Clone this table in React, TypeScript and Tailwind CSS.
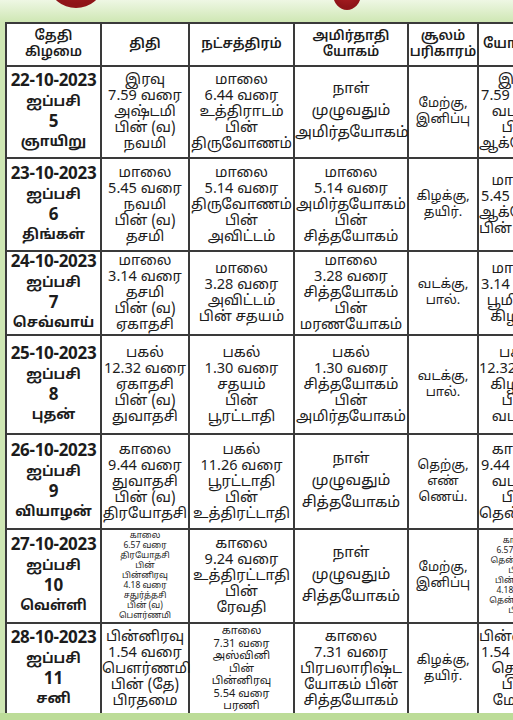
import React from "react";

type Cell = { lines: string[]; size?: "sm" | "xs" | "md" | "xsm" };
type Row = { date: string[]; h: string; cells: Cell[] };

const rows: Row[] = [
  {
    date: ["22-10-2023", "ஐப்பசி", "5", "ஞாயிறு"],
    h: "h-[92px]",
    cells: [
      { lines: ["இரவு", "7.59 வரை", "அஷ்டமி", "பின் (வ)", "நவமி"] },
      { lines: ["மாலை", "6.44 வரை", "உத்திராடம்", "பின்", "திருவோணம்"] },
      { lines: ["நாள்", "முழுவதும்", "அமிர்தயோகம்"], size: "md" },
      { lines: ["மேற்கு,", "இனிப்பு"], size: "sm" },
      { lines: ["இரவு", "7.59 வரை", "வடக்கு", "பின்", "ஆக்னேயம்"] },
    ],
  },
  {
    date: ["23-10-2023", "ஐப்பசி", "6", "திங்கள்"],
    h: "h-[93px]",
    cells: [
      { lines: ["மாலை", "5.45 வரை", "நவமி", "பின் (வ)", "தசமி"] },
      { lines: ["மாலை", "5.14 வரை", "திருவோணம்", "பின்", "அவிட்டம்"] },
      { lines: ["மாலை", "5.14 வரை", "அமிர்தயோகம்", "பின்", "சித்தயோகம்"] },
      { lines: ["கிழக்கு,", "தயிர்."], size: "sm" },
      { lines: ["மாலை", "5.45 வரை", "ஆக்னேயம்", "பின் தெற்கு"] },
    ],
  },
  {
    date: ["24-10-2023", "ஐப்பசி", "7", "செவ்வாய்"],
    h: "h-[83px]",
    cells: [
      { lines: ["மாலை", "3.14 வரை", "தசமி", "பின் (வ)", "ஏகாதசி"] },
      { lines: ["மாலை", "3.28 வரை", "அவிட்டம்", "பின் சதயம்"] },
      { lines: ["மாலை", "3.28 வரை", "சித்தயோகம்", "பின்", "மரணயோகம்"] },
      { lines: ["வடக்கு,", "பால்."], size: "sm" },
      { lines: ["மாலை", "3.14 வரை", "பூமியில்", "கிழக்கு"] },
    ],
  },
  {
    date: ["25-10-2023", "ஐப்பசி", "8", "புதன்"],
    h: "h-[99px]",
    cells: [
      { lines: ["பகல்", "12.32 வரை", "ஏகாதசி", "பின் (வ)", "துவாதசி"] },
      { lines: ["பகல்", "1.30 வரை", "சதயம்", "பின்", "பூரட்டாதி"] },
      { lines: ["பகல்", "1.30 வரை", "சித்தயோகம்", "பின்", "அமிர்தயோகம்"] },
      { lines: ["வடக்கு,", "பால்."], size: "sm" },
      { lines: ["பகல்", "12.32 வரை", "கிழக்கு", "பின்", "வடக்கு"] },
    ],
  },
  {
    date: ["26-10-2023", "ஐப்பசி", "9", "வியாழன்"],
    h: "h-[95px]",
    cells: [
      { lines: ["காலை", "9.44 வரை", "துவாதசி", "பின் (வ)", "திரயோதசி"] },
      { lines: ["பகல்", "11.26 வரை", "பூரட்டாதி", "பின்", "உத்திரட்டாதி"] },
      { lines: ["நாள்", "முழுவதும்", "சித்தயோகம்"], size: "md" },
      { lines: ["தெற்கு,", "எண்", "ணெய்."], size: "sm" },
      { lines: ["காலை", "9.44 வரை", "வடக்கு", "பின்", "தென்மேற்கு"] },
    ],
  },
  {
    date: ["27-10-2023", "ஐப்பசி", "10", "வெள்ளி"],
    h: "h-[94px]",
    cells: [
      {
        size: "xs",
        lines: ["காலை", "6.57 வரை", "திரயோதசி", "பின்", "பின்னிரவு", "4.18 வரை", "சதுர்த்தசி", "பின் (வ)", "பௌர்ணமி"],
      },
      { lines: ["காலை", "9.24 வரை", "உத்திரட்டாதி", "பின்", "ரேவதி"] },
      { lines: ["நாள்", "முழுவதும்", "சித்தயோகம்"], size: "md" },
      { lines: ["மேற்கு,", "இனிப்பு"], size: "sm" },
      {
        size: "xs",
        lines: ["காலை", "6.57 வரை", "தென்மேற்கு", "பின்", "பின்னிரவு", "4.18 வரை", "தென்கிழக்கு", "பின்"],
      },
    ],
  },
  {
    date: ["28-10-2023", "ஐப்பசி", "11", "சனி"],
    h: "h-[92px]",
    cells: [
      { lines: ["பின்னிரவு", "1.54 வரை", "பௌர்ணமி", "பின் (தே)", "பிரதமை"] },
      { lines: ["காலை", "7.31 வரை", "அஸ்வினி", "பின்", "பின்னிரவு", "5.54 வரை", "பரணி"], size: "xsm" },
      { lines: ["காலை", "7.31 வரை", "பிரபலாரிஷ்ட", "யோகம் பின்", "சித்தயோகம்"] },
      { lines: ["கிழக்கு,", "தயிர்."], size: "sm" },
      { lines: ["பின்னிரவு", "1.54 வரை", "தெற்கு", "பின்", "மேற்கு"] },
    ],
  },
];

const headers: string[][] = [
  ["தேதி", "கிழமை"],
  ["திதி"],
  ["நட்சத்திரம்"],
  ["அமிர்தாதி", "யோகம்"],
  ["சூலம்", "பரிகாரம்"],
  ["யோகினி"],
];

const widths = ["w-[95px]", "w-[88px]", "w-[105px]", "w-[114px]", "w-[70px]", "w-[80px]"];

function Banner() {
  return (
    <svg width="513" height="22" viewBox="0 0 513 22" className="block">
      <defs>
        <linearGradient id="top" x1="0" y1="0" x2="0" y2="1">
          <stop offset="0" stopColor="#eef7e4" />
          <stop offset="1" stopColor="#cfe7b4" />
        </linearGradient>
        <radialGradient id="red" cx="0.5" cy="0.3" r="0.6">
          <stop offset="0" stopColor="#c0262b" />
          <stop offset="1" stopColor="#8f1418" />
        </radialGradient>
      </defs>
      <rect width="513" height="22" fill="url(#top)" />
      <ellipse cx="76" cy="-14" rx="26" ry="22" fill="url(#red)" />
      <ellipse cx="347" cy="-6" rx="14" ry="16" fill="url(#red)" />
    </svg>
  );
}

function Lines({ lines, size }: { lines: string[]; size?: string }) {
  const cls =
    size === "xs"
      ? "text-[8.5px] leading-[10px]"
      : size === "xsm"
      ? "text-[11px] leading-[12.5px]"
      : size === "sm"
      ? "text-[13px] leading-[16px]"
      : size === "md"
      ? "text-[15px] leading-[22px]"
      : "text-[14.5px] leading-[16px]";
  return (
    <div className={cls}>
      {lines.map((l, i) => (
        <div key={i} className="whitespace-nowrap">
          {l}
        </div>
      ))}
    </div>
  );
}

export default function App() {
  return (
    <div
      className="w-[513px] h-[720px] overflow-hidden bg-[#cfe7b4] text-[#1c1c1c] flex flex-col"
      style={{ fontFamily: '"Noto Sans Tamil", "Noto Sans", "Liberation Sans", sans-serif' }}
    >
      <Banner />
      <div className="pl-[5px] flex-1 overflow-hidden">
        <table className="table-fixed border-collapse bg-white w-[552px]">
          <colgroup>
            {widths.map((w, i) => (
              <col key={i} className={w} />
            ))}
          </colgroup>
          <thead>
            <tr className="h-[43px]">
              {headers.map((h, i) => (
                <th
                  key={i}
                  className="border-2 border-[#3a3a3a] text-center align-middle font-semibold text-[13.5px] leading-[16px] px-0"
                >
                  {h.map((l, j) => (
                    <div key={j} className="whitespace-nowrap">
                      {l}
                    </div>
                  ))}
                </th>
              ))}
            </tr>
          </thead>
          <tbody>
            {rows.map((r, i) => (
              <tr key={i} className={r.h}>
                <td className="border-2 border-[#3a3a3a] text-center align-middle font-bold px-0">
                  {r.date.map((l, j) => (
                    <div
                      key={j}
                      className={
                        j === 0
                          ? "text-[17px] leading-[21px] tracking-[-0.3px] whitespace-nowrap"
                          : j === 2
                          ? "text-[17px] leading-[19px] whitespace-nowrap"
                          : "text-[14px] leading-[21px] whitespace-nowrap"
                      }
                    >
                      {l}
                    </div>
                  ))}
                </td>
                {r.cells.map((c, j) => (
                  <td key={j} className="border-2 border-[#3a3a3a] text-center align-middle px-0">
                    <Lines lines={c.lines} size={c.size} />
                  </td>
                ))}
              </tr>
            ))}
          </tbody>
        </table>
      </div>
      <div className="h-[7px] bg-[#bcdc98] shrink-0" />
    </div>
  );
}
